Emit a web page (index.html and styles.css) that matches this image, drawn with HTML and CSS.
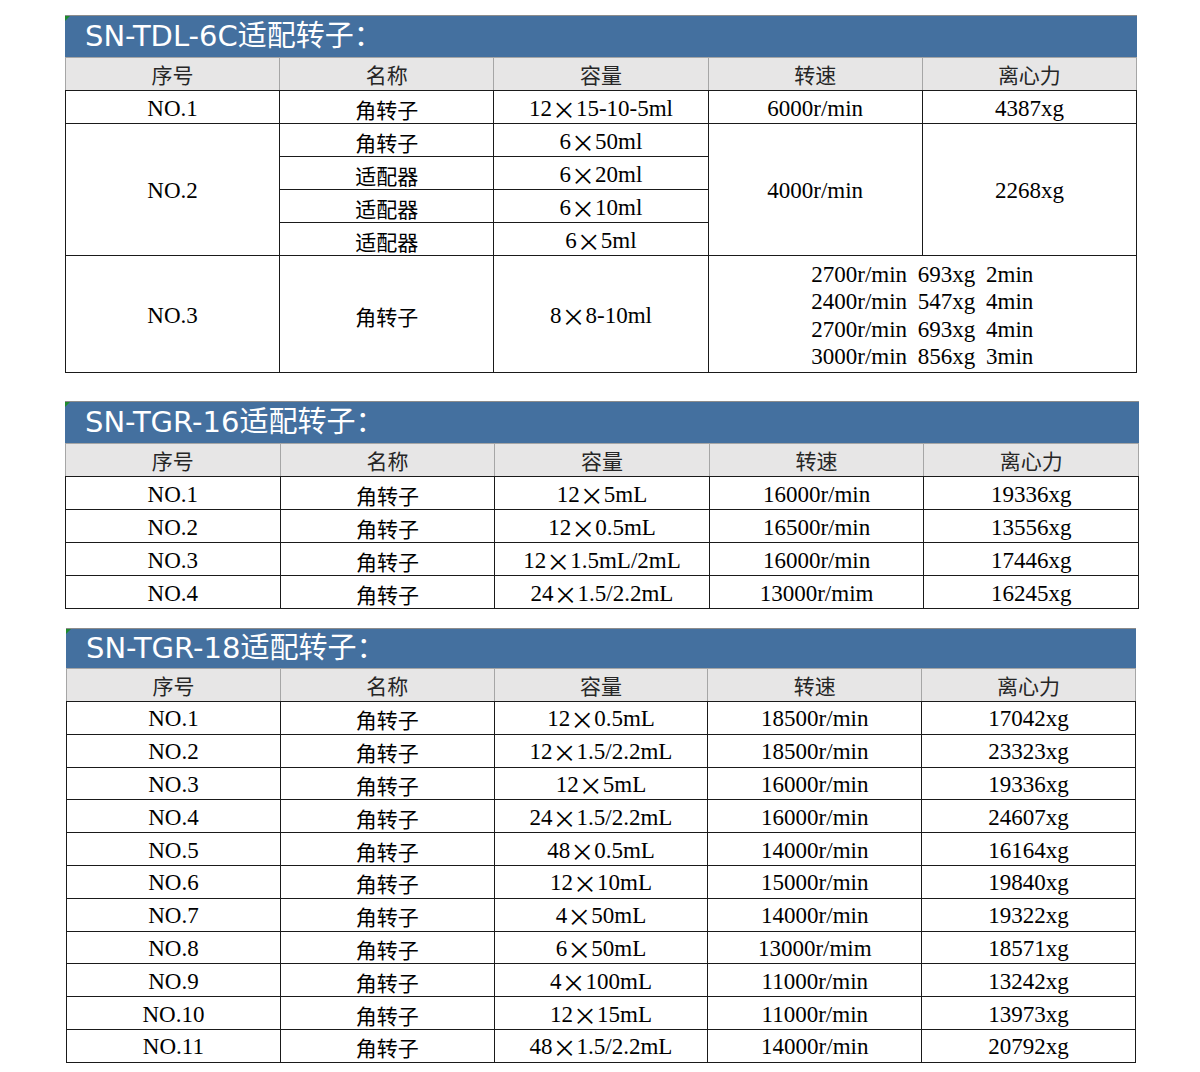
FILE: index.html
```html
<!DOCTYPE html>
<html lang="zh-CN">
<head>
<meta charset="utf-8">
<title>适配转子</title>
<link rel="stylesheet" href="styles.css">
</head>
<body>
<main class="page">

<section class="block block-a">
  <div class="title">SN-TDL-6C适配转子：</div>
  <table class="grid">
    <thead>
      <tr><th>序号</th><th>名称</th><th>容量</th><th>转速</th><th>离心力</th></tr>
    </thead>
    <tbody>
      <tr><td>NO.1</td><td class="zh">角转子</td><td>12<span class="mul">×</span>15-10-5ml</td><td>6000r/min</td><td>4387xg</td></tr>
      <tr><td rowspan="4">NO.2</td><td class="zh">角转子</td><td>6<span class="mul">×</span>50ml</td><td rowspan="4">4000r/min</td><td rowspan="4">2268xg</td></tr>
      <tr><td class="zh">适配器</td><td>6<span class="mul">×</span>20ml</td></tr>
      <tr><td class="zh">适配器</td><td>6<span class="mul">×</span>10ml</td></tr>
      <tr><td class="zh">适配器</td><td>6<span class="mul">×</span>5ml</td></tr>
      <tr class="tall"><td>NO.3</td><td class="zh">角转子</td><td>8<span class="mul">×</span>8-10ml</td>
        <td colspan="2" class="lines">2700r/min 693xg 2min<br>2400r/min 547xg 4min<br>2700r/min 693xg 4min<br>3000r/min 856xg 3min</td></tr>
    </tbody>
  </table>
</section>

<section class="block block-b">
  <div class="title">SN-TGR-16适配转子：</div>
  <table class="grid">
    <thead>
      <tr><th>序号</th><th>名称</th><th>容量</th><th>转速</th><th>离心力</th></tr>
    </thead>
    <tbody>
      <tr><td>NO.1</td><td class="zh">角转子</td><td>12<span class="mul">×</span>5mL</td><td>16000r/min</td><td>19336xg</td></tr>
      <tr><td>NO.2</td><td class="zh">角转子</td><td>12<span class="mul">×</span>0.5mL</td><td>16500r/min</td><td>13556xg</td></tr>
      <tr><td>NO.3</td><td class="zh">角转子</td><td>12<span class="mul">×</span>1.5mL/2mL</td><td>16000r/min</td><td>17446xg</td></tr>
      <tr><td>NO.4</td><td class="zh">角转子</td><td>24<span class="mul">×</span>1.5/2.2mL</td><td>13000r/mim</td><td>16245xg</td></tr>
    </tbody>
  </table>
</section>

<section class="block block-c">
  <div class="title">SN-TGR-18适配转子：</div>
  <table class="grid">
    <thead>
      <tr><th>序号</th><th>名称</th><th>容量</th><th>转速</th><th>离心力</th></tr>
    </thead>
    <tbody>
      <tr><td>NO.1</td><td class="zh">角转子</td><td>12<span class="mul">×</span>0.5mL</td><td>18500r/min</td><td>17042xg</td></tr>
      <tr><td>NO.2</td><td class="zh">角转子</td><td>12<span class="mul">×</span>1.5/2.2mL</td><td>18500r/min</td><td>23323xg</td></tr>
      <tr><td>NO.3</td><td class="zh">角转子</td><td>12<span class="mul">×</span>5mL</td><td>16000r/min</td><td>19336xg</td></tr>
      <tr><td>NO.4</td><td class="zh">角转子</td><td>24<span class="mul">×</span>1.5/2.2mL</td><td>16000r/min</td><td>24607xg</td></tr>
      <tr><td>NO.5</td><td class="zh">角转子</td><td>48<span class="mul">×</span>0.5mL</td><td>14000r/min</td><td>16164xg</td></tr>
      <tr><td>NO.6</td><td class="zh">角转子</td><td>12<span class="mul">×</span>10mL</td><td>15000r/min</td><td>19840xg</td></tr>
      <tr><td>NO.7</td><td class="zh">角转子</td><td>4<span class="mul">×</span>50mL</td><td>14000r/min</td><td>19322xg</td></tr>
      <tr><td>NO.8</td><td class="zh">角转子</td><td>6<span class="mul">×</span>50mL</td><td>13000r/mim</td><td>18571xg</td></tr>
      <tr><td>NO.9</td><td class="zh">角转子</td><td>4<span class="mul">×</span>100mL</td><td>11000r/min</td><td>13242xg</td></tr>
      <tr><td>NO.10</td><td class="zh">角转子</td><td>12<span class="mul">×</span>15mL</td><td>11000r/min</td><td>13973xg</td></tr>
      <tr><td>NO.11</td><td class="zh">角转子</td><td>48<span class="mul">×</span>1.5/2.2mL</td><td>14000r/min</td><td>20792xg</td></tr>
    </tbody>
  </table>
</section>

</main>
</body>
</html>
```

FILE: styles.css
```css
html, body {
  margin: 0;
  padding: 0;
  background: #ffffff;
}

body {
  font-family: "Liberation Serif", "Noto Sans CJK SC", serif;
  color: #000000;
}

.page {
  display: flex;
  flex-direction: column;
  align-items: flex-start;
  padding-top: 15px;
}

.block {
  margin-left: 65px;
  width: 1072px;
}

.block-b {
  width: 1074px;
  margin-top: 28px;
}

.block-c {
  margin-left: 66px;
  width: 1070px;
  margin-top: 19px;
}

.title {
  position: relative;
  box-sizing: border-box;
  height: 42px;
  padding-left: 20px;
  background: #44709f;
  border-top: 1px solid #8c8c8c;
  color: #ffffff;
  font-family: "DejaVu Sans", "Noto Sans CJK SC", sans-serif;
  font-size: 29px;
  line-height: 40px;
  white-space: nowrap;
}

.block-c .title {
  height: 40px;
  line-height: 38px;
}

.title::before {
  content: "";
  position: absolute;
  left: 0;
  top: 0;
  width: 0;
  height: 0;
  border-top: 5px solid #1e8b2d;
  border-right: 5px solid transparent;
}

.grid {
  width: 100%;
  border-collapse: collapse;
  table-layout: fixed;
}

.grid th {
  height: 32px;
  padding: 0;
  background: #e7e6e6;
  border: 1px solid #a6a6a6;
  border-bottom: 1px solid #1a1a1a;
  color: #262626;
  font-family: "Noto Sans CJK SC", sans-serif;
  font-weight: 400;
  font-size: 21px;
  line-height: 22px;
  text-align: center;
  vertical-align: middle;
}

.grid td {
  height: 29px;
  padding: 3px 0 0;
  border: 1px solid #1a1a1a;
  font-size: 23px;
  line-height: 22px;
  text-align: center;
  vertical-align: middle;
  white-space: nowrap;
}

.block-c .grid td {
  height: 28.8px;
}

.grid td.zh {
  font-family: "Noto Sans CJK SC", sans-serif;
  font-size: 21px;
  line-height: 20px;
}

.mul {
  display: inline-block;
  width: 24px;
  height: 22px;
  font-family: "Noto Sans CJK SC", sans-serif;
  font-size: 24px;
  line-height: 22px;
  text-align: center;
  vertical-align: top;
}

.grid tr.tall td {
  height: 113px;
}

.grid tr.tall td.lines {
  height: 113px;
  padding-top: 3px;
  line-height: 27.5px;
  word-spacing: 5px;
}
```
